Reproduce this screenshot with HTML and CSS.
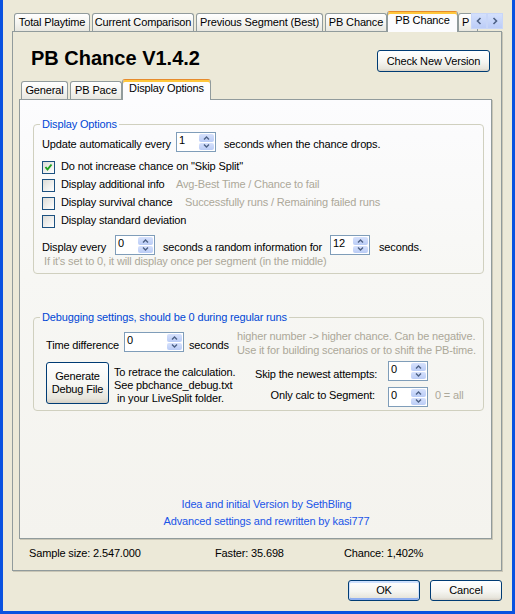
FILE: index.html
```html
<!DOCTYPE html>
<html>
<head>
<meta charset="utf-8">
<title>PB Chance</title>
<link rel="stylesheet" href="styles.css">
</head>
<body>
<div class="window">
  <div class="tabstrip outer-strip">
    <div class="tab w-total">Total Playtime</div>
    <div class="tab w-current">Current Comparison</div>
    <div class="tab w-prev">Previous Segment (Best)</div>
    <div class="tab w-pb">PB Chance</div>
    <div class="tab active w-pbsel">PB Chance</div>
    <div class="tab w-p">P</div>
    <div class="scroller">
      <span class="sbtn"><svg width="6" height="8" viewBox="0 0 6 8"><polyline points="4.5,1 1.5,4 4.5,7" fill="none" stroke="#4D6185" stroke-width="1.6"/></svg></span>
      <span class="sbtn"><svg width="6" height="8" viewBox="0 0 6 8"><polyline points="1.5,1 4.5,4 1.5,7" fill="none" stroke="#4D6185" stroke-width="1.6"/></svg></span>
    </div>
  </div>
  <div class="outer-panel">
    <div class="header">
      <h1 class="title">PB Chance V1.4.2</h1>
      <button class="btn btn-check">Check New Version</button>
    </div>
    <div class="tabstrip inner-strip">
      <div class="tab w-general">General</div>
      <div class="tab w-pace">PB Pace</div>
      <div class="tab active w-display">Display Options</div>
    </div>
    <div class="inner-panel">
      <fieldset class="group g-display">
        <legend>Display Options</legend>
        <div class="gbody gbody-display">
          <div class="row">
            <span class="lbl lbl-update">Update automatically every</span>
            <span class="spin"><span class="val">1</span><span class="btns"><i><svg width="7" height="4" viewBox="0 0 7 4"><polyline points="1,3.5 3.5,1 6,3.5" fill="none" stroke="#4D6185" stroke-width="1.4"/></svg></i><i><svg width="7" height="4" viewBox="0 0 7 4"><polyline points="1,0.5 3.5,3 6,0.5" fill="none" stroke="#4D6185" stroke-width="1.4"/></svg></i></span></span>
            <span class="lbl lbl-gap8">seconds when the chance drops.</span>
          </div>
          <div class="checks">
            <div class="crow">
              <span class="cb"><svg width="11" height="11" viewBox="0 0 11 11"><polyline points="2.5,5 4.5,7.5 8.5,2.5" fill="none" stroke="#21A121" stroke-width="2"/></svg></span>
              <span class="ctext">Do not increase chance on "Skip Split"</span>
            </div>
            <div class="crow">
              <span class="cb"></span>
              <span class="ctext ct-add">Display additional info</span>
              <span class="ctext hint">Avg-Best Time / Chance to fail</span>
            </div>
            <div class="crow">
              <span class="cb"></span>
              <span class="ctext ct-surv">Display survival chance</span>
              <span class="ctext hint">Successfully runs / Remaining failed runs</span>
            </div>
            <div class="crow">
              <span class="cb"></span>
              <span class="ctext">Display standard deviation</span>
            </div>
          </div>
          <div class="row row-every">
            <span class="lbl lbl-every">Display every</span>
            <span class="spin"><span class="val">0</span><span class="btns"><i><svg width="7" height="4" viewBox="0 0 7 4"><polyline points="1,3.5 3.5,1 6,3.5" fill="none" stroke="#4D6185" stroke-width="1.4"/></svg></i><i><svg width="7" height="4" viewBox="0 0 7 4"><polyline points="1,0.5 3.5,3 6,0.5" fill="none" stroke="#4D6185" stroke-width="1.4"/></svg></i></span></span>
            <span class="lbl lbl-gap8 lbl-random">seconds a random information for</span>
            <span class="spin"><span class="val">12</span><span class="btns"><i><svg width="7" height="4" viewBox="0 0 7 4"><polyline points="1,3.5 3.5,1 6,3.5" fill="none" stroke="#4D6185" stroke-width="1.4"/></svg></i><i><svg width="7" height="4" viewBox="0 0 7 4"><polyline points="1,0.5 3.5,3 6,0.5" fill="none" stroke="#4D6185" stroke-width="1.4"/></svg></i></span></span>
            <span class="lbl lbl-gap9">seconds.</span>
          </div>
          <div class="note hint">If it's set to 0, it will display once per segment (in the middle)</div>
        </div>
      </fieldset>

      <fieldset class="group g-debug">
        <legend>Debugging settings, should be 0 during regular runs</legend>
        <div class="gbody gbody-debug">
          <div class="row row-time">
            <span class="lbl lbl-time">Time difference</span>
            <span class="spin spin-wide"><span class="val">0</span><span class="btns"><i><svg width="7" height="4" viewBox="0 0 7 4"><polyline points="1,3.5 3.5,1 6,3.5" fill="none" stroke="#4D6185" stroke-width="1.4"/></svg></i><i><svg width="7" height="4" viewBox="0 0 7 4"><polyline points="1,0.5 3.5,3 6,0.5" fill="none" stroke="#4D6185" stroke-width="1.4"/></svg></i></span></span>
            <span class="lbl lbl-secs">seconds</span>
            <div class="hint hint-block">higher number -&gt; higher chance. Can be negative.<br>Use it for building scenarios or to shift the PB-time.</div>
          </div>
          <div class="row row-debug">
            <button class="btn btn-gen">Generate<br>Debug File</button>
            <div class="side-text">To retrace the calculation.<br>See pbchance_debug.txt<br>&nbsp;in your LiveSplit folder.</div>
            <div class="rgrid">
              <span class="rlbl rlbl-1">Skip the newest attempts:</span>
              <span class="spin"><span class="val">0</span><span class="btns"><i><svg width="7" height="4" viewBox="0 0 7 4"><polyline points="1,3.5 3.5,1 6,3.5" fill="none" stroke="#4D6185" stroke-width="1.4"/></svg></i><i><svg width="7" height="4" viewBox="0 0 7 4"><polyline points="1,0.5 3.5,3 6,0.5" fill="none" stroke="#4D6185" stroke-width="1.4"/></svg></i></span></span>
              <span></span>
              <span class="rlbl rlbl-2">Only calc to Segment:</span>
              <span class="spin"><span class="val">0</span><span class="btns"><i><svg width="7" height="4" viewBox="0 0 7 4"><polyline points="1,3.5 3.5,1 6,3.5" fill="none" stroke="#4D6185" stroke-width="1.4"/></svg></i><i><svg width="7" height="4" viewBox="0 0 7 4"><polyline points="1,0.5 3.5,3 6,0.5" fill="none" stroke="#4D6185" stroke-width="1.4"/></svg></i></span></span>
              <span class="hint rhint">0 = all</span>
            </div>
          </div>
        </div>
      </fieldset>

      <div class="credits">
        <div>Idea and initial Version by SethBling</div>
        <div>Advanced settings and rewritten by kasi777</div>
      </div>
    </div>
    <div class="status">
      <span>Sample size: 2.547.000</span>
      <span>Faster: 35.698</span>
      <span>Chance: 1,402%</span>
    </div>
  </div>
  <div class="actions">
    <button class="btn btn-ok">OK</button>
    <button class="btn btn-cancel">Cancel</button>
  </div>
</div>
</body>
</html>
```

FILE: styles.css
```css
* { box-sizing: border-box; }
html, body { margin: 0; padding: 0; }
body {
  font-family: "Liberation Sans", Arial, sans-serif;
  font-size: 11px;
  line-height: 13px;
  letter-spacing: -0.15px;
  color: #000;
  background: #ECE9D8;
}
.window {
  width: 515px;
  height: 614px;
  background: #ECE9D8;
  border-left: 3px solid #0A52E0;
  border-right: 3px solid #0A52E0;
  border-bottom: 3px solid #0A52E0;
  padding: 11px 10px 0 9px;
  display: flex;
  flex-direction: column;
}

/* tabs */
.tabstrip {
  display: flex;
  align-items: flex-end;
  height: 20px;
  padding-left: 2px;
  gap: 2px;
  position: relative;
  z-index: 1;
  flex: none;
}
.tab {
  height: 18px;
  border: 1px solid #919B9C;
  border-bottom: none;
  border-radius: 3px 3px 0 0;
  background: linear-gradient(#FFFFFF, #F4F4F0 55%, #E8E7E0);
  line-height: 16px;
  text-align: center;
  white-space: nowrap;
  overflow: hidden;
  flex: none;
}
.tab.active {
  height: 21px;
  margin: 0 -2px -1px;
  background: #FCFCFE;
  border-top: 1px solid #E68B2C;
  box-shadow: inset 0 2px 0 #FFC73C;
  padding-top: 2px;
  line-height: 13px;
}
.w-total { width: 76px; }
.w-current { width: 102px; }
.w-prev { width: 127px; }
.w-pb { width: 62px; }
.w-pbsel { width: 71px; }
.w-p { width: 20px; text-align: left; padding-left: 3px; }
.w-general { width: 47px; }
.w-pace { width: 52px; }
.w-display { width: 89px; }

.scroller {
  position: absolute;
  left: 459px;
  top: 2px;
  width: 32px;
  height: 16px;
  display: flex;
  background: #ECE9D8;
}
.sbtn {
  flex: 1;
  display: flex;
  align-items: center;
  justify-content: center;
  background: linear-gradient(#D4E0FC, #BCCDF7);
  border: 1px solid #C8D6F8;
}

/* panels */
.outer-panel {
  width: 490px;
  height: 540px;
  border: 1px solid #919B9C;
  box-shadow: 1px 1px 0 #C9C6B6;
  background: #ECE9D8;
  flex: none;
}
.header {
  display: flex;
  justify-content: space-between;
  align-items: flex-start;
  height: 40px;
  padding: 14px 11px 0 18px;
}
.title {
  margin: 0;
  font-size: 20px;
  line-height: 24px;
  font-weight: bold;
  letter-spacing: 0;
}
.btn {
  font: inherit;
  letter-spacing: inherit;
  color: #000;
  border: 1px solid #003C74;
  border-radius: 3px;
  background: linear-gradient(#FFFFFF 0%, #F5F5F1 55%, #E7E5DC 88%, #D6D0C5 100%);
  padding: 0;
  display: flex;
  align-items: center;
  justify-content: center;
  text-align: center;
}
.btn-check {
  width: 113px;
  height: 22px;
  margin-top: 4px;
}
.inner-strip {
  margin-top: 7px;
  margin-left: 6px;
}
.inner-panel {
  margin-left: 6px;
  width: 473px;
  height: 440px;
  border: 1px solid #919B9C;
  box-shadow: 1px 1px 0 #C9C6B6;
  background: linear-gradient(#FCFCFE 0%, #F7F7F4 40%, #F4F3EE 100%);
  overflow: hidden;
}

/* group boxes */
.group {
  margin: 0 7px 0 13px;
  padding: 0;
  border: 1px solid #D0D0BF;
  border-radius: 4px;
  min-inline-size: 0;
}
.group legend {
  color: #0046D5;
  padding: 0 2px;
  margin-left: 6px;
  line-height: 13px;
}
.g-display { margin-top: 18px; }
.g-debug { margin-top: 37px; }
.gbody-display { padding: 1px 0 5px 8px; }
.gbody-debug { padding: 5px 0 3px 12px; }

.row {
  display: flex;
  align-items: flex-start;
}
.lbl {
  margin-top: 6px;
  white-space: nowrap;
  flex: none;
}
.lbl-update { width: 134px; }
.lbl-gap8 { margin-left: 8px; }
.lbl-gap9 { margin-left: 9px; }
.lbl-every { width: 73px; }
.lbl-random { width: 167px; }

.spin {
  display: flex;
  width: 40px;
  height: 20px;
  border: 1px solid #7F9DB9;
  background: #fff;
  flex: none;
}
.spin-wide { width: 60px; }
.spin .val {
  flex: 1;
  padding: 1px 0 0 2px;
  line-height: 13px;
}
.spin .btns {
  width: 15px;
  margin: 1px 1px 1px 0;
  display: flex;
  flex-direction: column;
  gap: 1px;
}
.spin .btns i {
  flex: 1;
  display: flex;
  align-items: center;
  justify-content: center;
  background: linear-gradient(#D6E1FC, #BACCF6);
  border-radius: 2px;
}
.spin .btns svg { display: block; }

.checks { margin-top: 6px; }
.crow {
  display: flex;
  align-items: flex-start;
  height: 18px;
}
.cb {
  width: 13px;
  height: 13px;
  margin-top: 3px;
  border: 1px solid #1C5180;
  background: linear-gradient(135deg, #DCDCD7, #FFFFFF);
  flex: none;
  display: flex;
  align-items: center;
  justify-content: center;
}
.cb svg { display: block; }
.ctext {
  margin-top: 2px;
  white-space: nowrap;
}
.crow > .ctext:nth-child(2) { margin-left: 6px; }
.ct-add { width: 115px; }
.ct-surv { width: 124px; }

.hint { color: #ACA899; }
.row-every { margin-top: 5px; }
.note { padding-left: 2px; white-space: nowrap; }

.row-time { height: 28px; }
.row-time .spin { margin-top: 3px; }
.row-time .lbl { margin-top: 10px; }
.lbl-time { width: 78px; }
.lbl-secs { margin-left: 5px; width: 48px; }
.hint-block {
  line-height: 14px;
  white-space: nowrap;
  flex: none;
}

.row-debug { margin-top: 4px; height: 46px; }
.btn-gen {
  width: 63px;
  height: 42px;
  margin-top: 1px;
  line-height: 13px;
  flex: none;
}
.side-text {
  margin-left: 5px;
  margin-top: 5px;
  width: 141px;
  white-space: nowrap;
  flex: none;
}
.rgrid {
  display: grid;
  grid-template-columns: 133px 40px auto;
  grid-template-rows: 20px 20px;
  row-gap: 6px;
}
.rlbl {
  text-align: right;
  padding-right: 13px;
  white-space: nowrap;
}
.rlbl-1 { margin-top: 7px; }
.rlbl-2 { margin-top: 2px; }
.rhint { margin-left: 7px; margin-top: 2px; white-space: nowrap; }

.credits {
  margin-top: 85px;
  text-align: center;
  padding-left: 22px;
  line-height: 17px;
  color: #1B55E8;
}

.status {
  display: grid;
  grid-template-columns: 186px 129px auto;
  padding-left: 16px;
  margin-top: 8px;
}

.actions {
  display: flex;
  justify-content: flex-end;
  gap: 10px;
  margin-top: 9px;
}
.btn-ok, .btn-cancel {
  width: 72px;
  height: 21px;
}
.btn-ok {
  box-shadow: inset 0 1px 0 1px #CEE0FD, inset 0 -1px 0 1px #8FAEF0;
}
```
